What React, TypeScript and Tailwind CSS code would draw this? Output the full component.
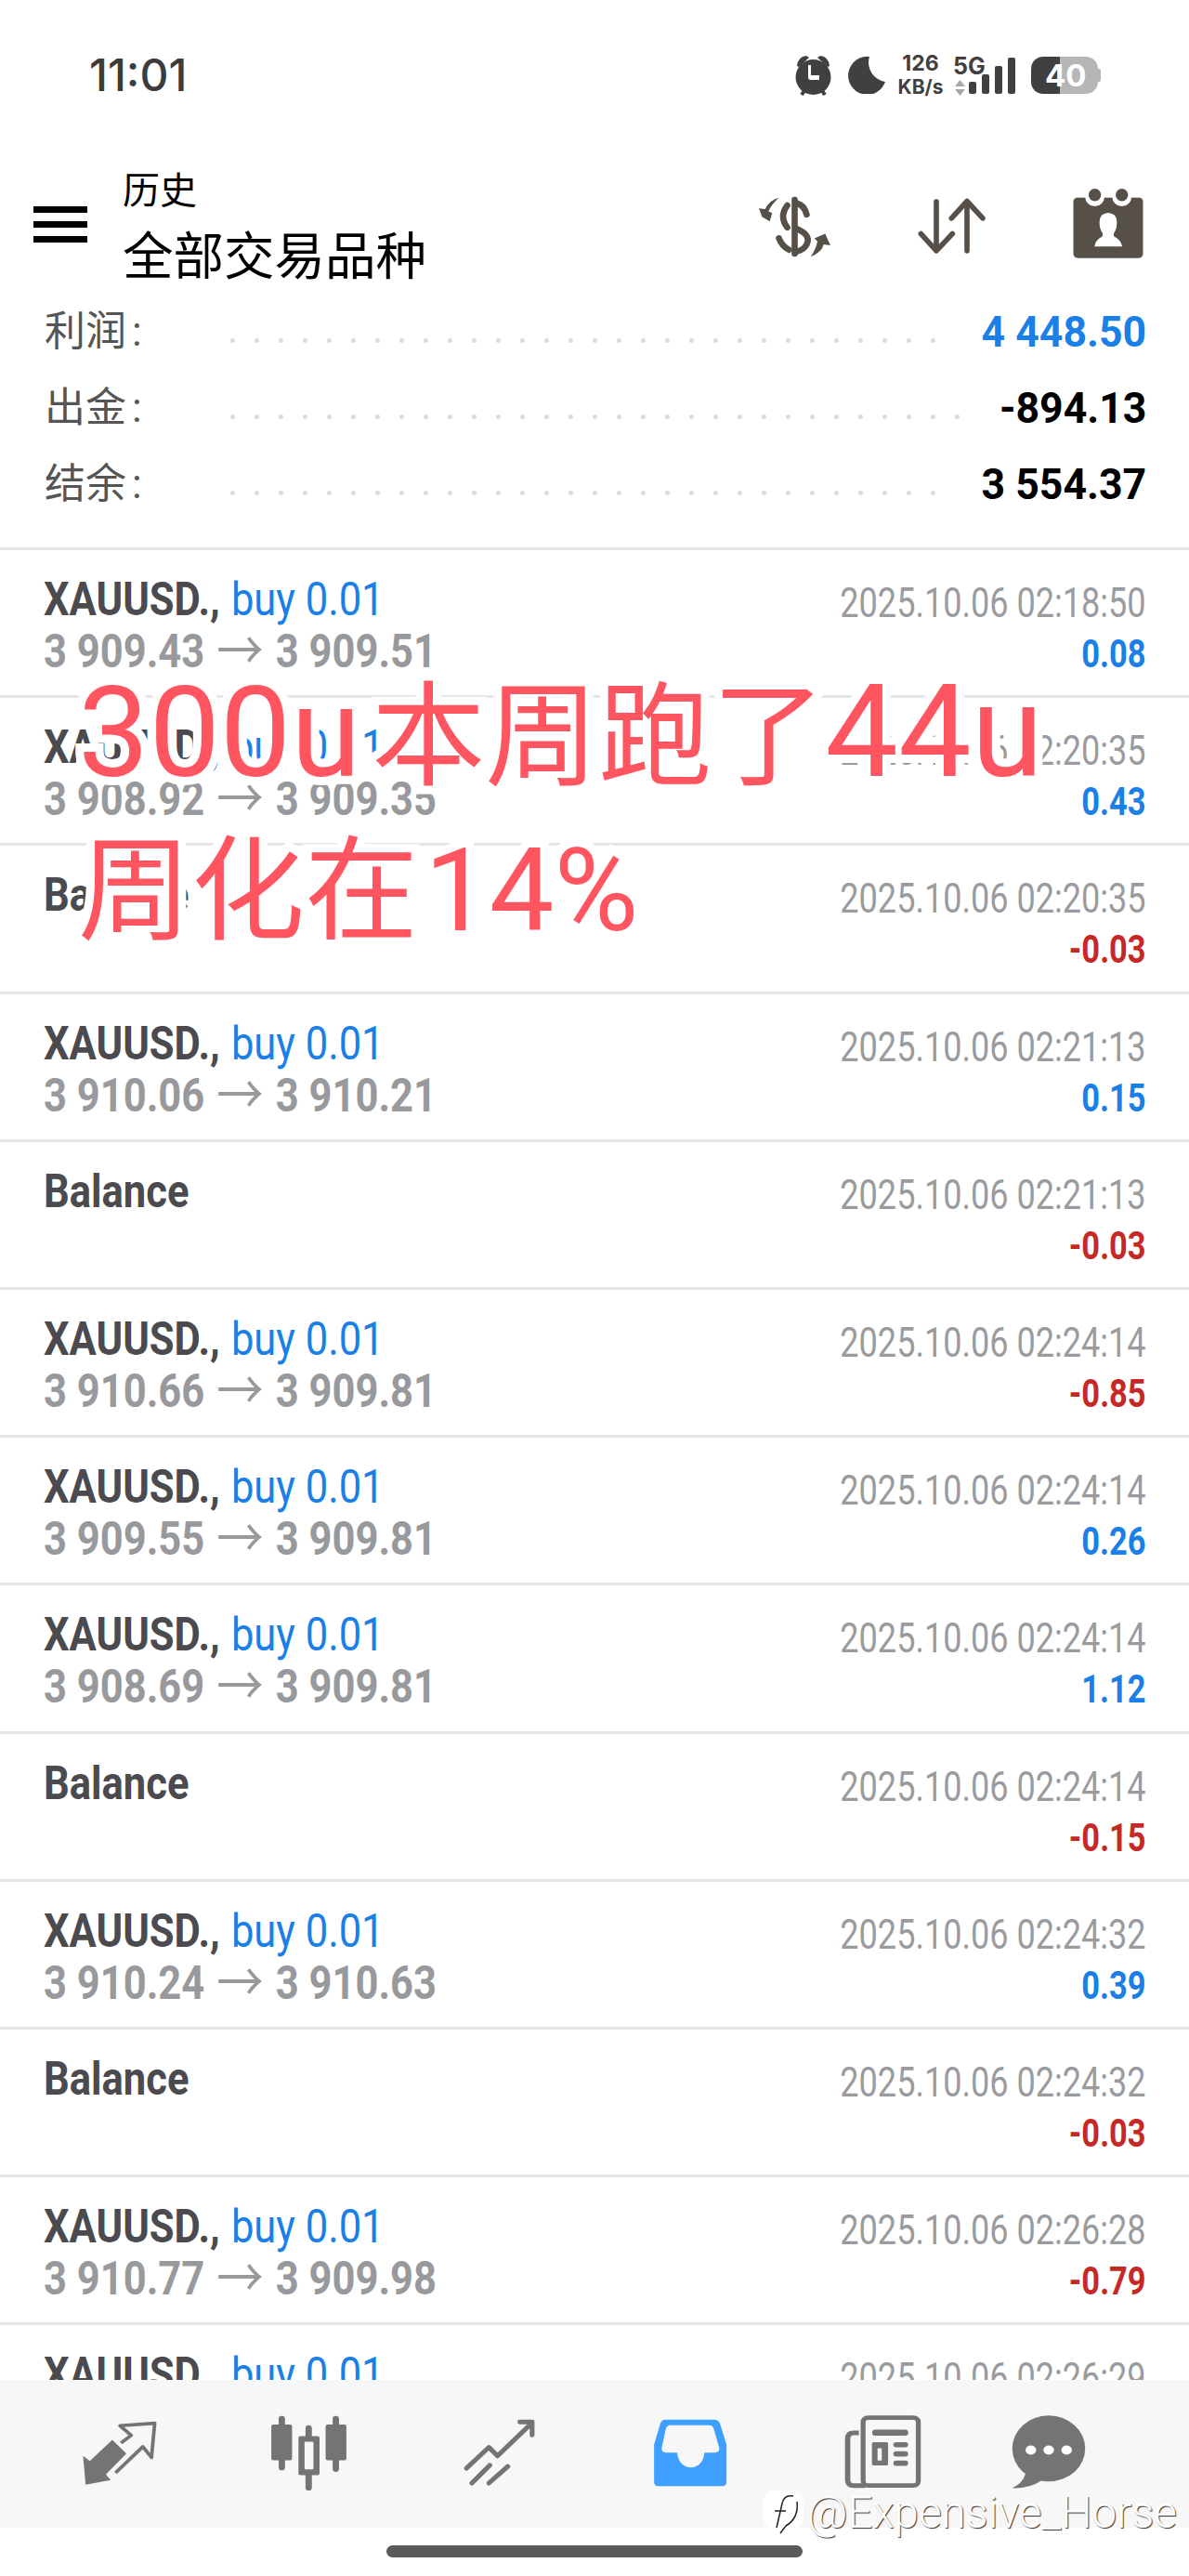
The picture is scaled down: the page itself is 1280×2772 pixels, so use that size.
import React from "react";

type Row = { t: string; v: string; p?: [string, string] };
const rows: Row[] = [
  { p: ["3 909.43", "3 909.51"], t: "02:18:50", v: "0.08" },
  { p: ["3 908.92", "3 909.35"], t: "02:20:35", v: "0.43" },
  { t: "02:20:35", v: "-0.03" },
  { p: ["3 910.06", "3 910.21"], t: "02:21:13", v: "0.15" },
  { t: "02:21:13", v: "-0.03" },
  { p: ["3 910.66", "3 909.81"], t: "02:24:14", v: "-0.85" },
  { p: ["3 909.55", "3 909.81"], t: "02:24:14", v: "0.26" },
  { p: ["3 908.69", "3 909.81"], t: "02:24:14", v: "1.12" },
  { t: "02:24:14", v: "-0.15" },
  { p: ["3 910.24", "3 910.63"], t: "02:24:32", v: "0.39" },
  { t: "02:24:32", v: "-0.03" },
  { p: ["3 910.77", "3 909.98"], t: "02:26:28", v: "-0.79" },
  { p: ["3 910.77", "3 909.98"], t: "02:26:29", v: "0.10" },
];

function TradeRow({ r }: { r: Row }) {
  const neg = r.v.startsWith("-");
  return (
    <div className="flex h-[159.2px] shrink-0 justify-between border-b-[3px] border-[#e5e5e5] pl-[47px] pr-[46px] pt-[25px]">
      <div className="flex origin-left scale-x-[0.87] flex-col whitespace-nowrap text-[50px] leading-[56px]">
        {r.p ? (
          <div>
            <span className="font-bold text-[#4a4a4f]">XAUUSD.,</span>
            <span className="ml-[14px] text-[#1a7fe6]">buy 0.01</span>
          </div>
        ) : (
          <div className="font-bold text-[#4a4a4f]">Balance</div>
        )}
        {r.p && (
          <div className="flex gap-[15px] font-bold text-[#98999c]">
            <span>{r.p[0]}</span>
            <span className="text-[58px] font-normal">→</span>
            <span>{r.p[1]}</span>
          </div>
        )}
      </div>
      <div className="flex origin-right scale-x-[0.82] flex-col items-end whitespace-nowrap pt-[4px]">
        <div className="text-[44px] leading-[56px] text-[#9a9b9e]">2025.10.06 {r.t}</div>
        <div className={`text-[42px] font-bold leading-[54px] ${neg ? "text-[#c62828]" : "text-[#1a7fe6]"}`}>{r.v}</div>
      </div>
    </div>
  );
}

function Summary({ label, value, dots, blue }: { label: string; value: string; dots: number; blue?: boolean }) {
  return (
    <div className="flex h-[82px] items-center pl-[48px] pr-[46px]">
      <div className="w-[200px] shrink-0 text-[44px] text-[#555]">
        {label}
        <span className="ml-[6px]">:</span>
      </div>
      <div className="mt-[18px] flex gap-[21px]">
        {Array.from({ length: dots }).map((_, i) => (
          <span key={i} className="h-[5px] w-[5px] rounded-full bg-[#dcdcdc]" />
        ))}
      </div>
      <div className={`ml-auto origin-right scale-x-[0.97] whitespace-nowrap text-[46px] font-bold ${blue ? "text-[#1a7fe6]" : "text-black"}`}>
        {value}
      </div>
    </div>
  );
}

function Status() {
  return (
    <div className="flex h-[162px] items-center justify-between pb-[1px] pl-[96px] pr-[95px]">
      <div className="text-[48px] font-medium text-[#3c3c3c] [font-family:Inter,sans-serif]">11:01</div>
      <div className="flex items-center text-[#404040]">
        <svg width="39" height="45" viewBox="0 0 39 45">
          <circle cx="19.5" cy="25" r="19" fill="#404040" />
          <path d="M2 13 Q3 3 12 2 L15 4 L4 14Z M37 13 Q36 3 27 2 L24 4 L35 14Z" fill="#404040" />
          <path d="M7 44 L11 38 M32 44 L28 38" stroke="#404040" strokeWidth="4" />
          <path d="M17 15 V26 H26 V31 H17 Q14 31 14 28 V15Z" fill="#fff" transform="translate(0 -3) " />
        </svg>
        <svg className="ml-[17px]" width="41" height="41" viewBox="0 0 41 41">
          <path d="M24 1 A20.5 20.5 0 1 0 41 28 A21 21 0 0 1 24 1Z" fill="#404040" />
        </svg>
        <div className="ml-[12px] flex w-[52px] flex-col items-center font-bold leading-none [font-family:Inter,sans-serif]">
          <span className="text-[23px] leading-[25px]">126</span>
          <span className="text-[21px] leading-[25px]">KB/s</span>
        </div>
        <div className="ml-[9px] flex w-[15px] flex-col">
          <span className="whitespace-nowrap text-[25px] font-bold leading-[26px] [font-family:Inter,sans-serif]">5G</span>
          <svg width="11" height="17" viewBox="0 0 11 17" className="mt-[2px] ml-[2px]">
            <path d="M5.5 0 L11 7 H0Z M5.5 17 L11 10 H0Z" fill="#a8a8a8" />
          </svg>
        </div>
        <div className="ml-[2px] flex items-end gap-[6px] self-end pb-[5px]">
          <span className="h-[13px] w-[8px] rounded-[2px] bg-[#404040]" />
          <span className="h-[21px] w-[8px] rounded-[2px] bg-[#404040]" />
          <span className="h-[30px] w-[8px] rounded-[2px] bg-[#404040]" />
          <span className="h-[39px] w-[8px] rounded-[2px] bg-[#404040]" />
        </div>
        <div className="relative ml-[17px] flex h-[40px] w-[75px] items-center">
          <span className="h-[40px] w-[31px] rounded-l-[13px] bg-[#404040]" />
          <span className="h-[40px] w-[41px] rounded-r-[13px] bg-[#b6b6b6]" />
          <span className="h-[14px] w-[3px] rounded-r-[2px] bg-[#b6b6b6]" />
          <span className="absolute left-[15px] top-0 text-[33px] font-bold leading-[40px] text-white [font-family:Inter,sans-serif]">40</span>
        </div>
      </div>
    </div>
  );
}

function Header() {
  const c = "#575049";
  return (
    <div className="flex h-[154px] items-start">
      <div className="ml-[36px] mt-[60px] flex w-[58px] flex-col gap-[9px]">
        <span className="h-[7px] bg-black" />
        <span className="h-[7px] bg-black" />
        <span className="h-[7px] bg-black" />
      </div>
      <div className="ml-[38px] flex w-[328px] flex-col whitespace-nowrap text-black">
        <div className="mt-[19px] text-[40px] leading-[50px]">历史</div>
        <div className="mt-[12px] text-[54.5px] leading-[66px]">全部交易品种</div>
      </div>
      <svg className="ml-[355px] mt-[48px]" width="82" height="68" viewBox="110 55 245 205">
        <rect x="221" y="60" width="20" height="195" rx="10" fill={c} />
        <path d="M240 82 Q262 88 270 118 M207 88 Q180 125 207 160 M240 165 Q285 185 270 215 Q260 232 240 237 M180 195 Q190 220 212 232" stroke={c} strokeWidth="20" strokeLinecap="round" fill="none" />
        <path d="M180 63 Q150 70 135 100 L115 98 L125 125 L150 140 L158 113 L146 108 Q155 85 180 63Z M283 255 Q320 240 325 215 L347 218 L330 180 L295 195 L305 205 Q300 230 283 255Z" fill={c} />
      </svg>
      <svg className="ml-[90px] mt-[50px]" width="75" height="62" viewBox="625 65 225 185">
        <path d="M688 80 V238 M638 183 L688 238 L740 183 M787 238 V78 M737 133 L787 78 L838 133" stroke={c} strokeWidth="17" strokeLinecap="round" strokeLinejoin="round" fill="none" />
      </svg>
      <svg className="ml-[93px] mt-[41px]" width="76" height="75" viewBox="1128 42 224 224">
        <rect x="1128" y="70" width="224" height="195" rx="14" fill={c} />
        <circle cx="1197" cy="68" r="31" fill="#fff" />
        <circle cx="1284" cy="68" r="31" fill="#fff" />
        <rect x="1128" y="42" width="224" height="28" fill="#fff" />
        <circle cx="1197" cy="62" r="20" fill={c} />
        <circle cx="1284" cy="62" r="20" fill={c} />
        <path d="M1240 120 Q1212 122 1212 150 Q1212 172 1222 185 L1222 195 Q1200 205 1196 228 L1285 228 Q1280 205 1258 195 L1258 185 Q1268 172 1268 150 Q1268 122 1240 120Z" fill="#fff" />
      </svg>
    </div>
  );
}

function Nav() {
  const g = "#747474";
  return (
    <div className="flex h-[159px] shrink-0 items-start bg-[#f7f7f8]">
      <svg className="ml-[87px] mt-[42px]" width="83" height="73" viewBox="50 40 240 220" preserveAspectRatio="none">
        <path d="M148 108 L192 152 L128 220 L143 238 L65 253 L57 160 L78 176Z" fill={g} />
        <path d="M158 215 L243 130 L270 165 L280 54 L172 62 L207 93 L175 118" stroke={g} strokeWidth="11" fill="none" strokeLinejoin="round" />
      </svg>
      <svg className="ml-[120px] mt-[38px]" width="86" height="82" viewBox="640 28 250 245" preserveAspectRatio="none">
        <g fill={g}>
          <rect x="669" y="30" width="20" height="175" rx="10" />
          <rect x="646" y="58" width="65" height="115" rx="6" />
          <rect x="753" y="60" width="20" height="210" rx="10" />
          <rect x="731" y="95" width="66" height="126" rx="6" />
          <rect x="838" y="30" width="20" height="180" rx="10" />
          <rect x="816" y="58" width="65" height="115" rx="6" />
        </g>
        <rect x="750" y="113" width="28" height="89" rx="4" fill="#f7f7f8" />
      </svg>
      <svg className="ml-[121px] mt-[41px]" width="81" height="73" viewBox="1240 35 235 220" preserveAspectRatio="none">
        <path d="M1255 198 L1325 130 L1352 158 L1455 55 M1422 48 H1460 V90 M1272 246 L1328 188 M1325 246 L1384 192" stroke={g} strokeWidth="15" strokeLinecap="round" strokeLinejoin="round" fill="none" />
      </svg>
      <svg className="ml-[125px] mt-[42px]" width="81" height="73" viewBox="35 38 215 218" preserveAspectRatio="none">
        <path d="M70 40 H210 Q222 40 226 52 L245 120 V240 Q245 254 230 254 H52 Q38 254 38 240 V120 L56 52 Q60 40 70 40Z" fill="#3f9fff" />
        <path d="M85 58 H195 Q205 58 208 68 L224 130 Q226 146 212 146 H182 C178 210 108 210 104 146 H72 Q58 146 60 130 L72 68 Q76 58 85 58Z" fill="#f7f7f8" />
      </svg>
      <svg className="ml-[124px] mt-[38px]" width="84" height="79" viewBox="578 28 222 238" preserveAspectRatio="none">
        <rect x="634" y="36" width="157" height="220" rx="14" fill="none" stroke={g} strokeWidth="14" />
        <path d="M622 85 H607 Q590 85 590 105 V238 Q590 256 607 256 H640" stroke={g} strokeWidth="15" fill="none" />
        <g fill={g}>
          <rect x="660" y="75" width="102" height="19" rx="8" />
          <path fillRule="evenodd" d="M664 115 H700 Q705 115 705 120 V186 Q705 191 700 191 H664 Q659 191 659 186 V120 Q659 115 664 115Z M675 135 V175 H687 V135Z" />
          <rect x="720" y="115" width="42" height="17" rx="8" />
          <rect x="720" y="145" width="42" height="17" rx="8" />
          <rect x="720" y="175" width="42" height="17" rx="8" />
        </g>
      </svg>
      <svg className="ml-[97px] mt-[38px]" width="80" height="79" viewBox="1060 28 212 236" preserveAspectRatio="none">
        <ellipse cx="1166" cy="135" rx="104" ry="106" fill={g} />
        <path d="M1100 215 Q1092 248 1062 262 Q1110 264 1148 236Z" fill={g} />
        <circle cx="1115" cy="140" r="15" fill="#fff" />
        <circle cx="1166" cy="140" r="15" fill="#fff" />
        <circle cx="1217" cy="140" r="15" fill="#fff" />
      </svg>
    </div>
  );
}

export default function App() {
  return (
    <div className="relative flex h-[2772px] w-[1280px] flex-col overflow-hidden bg-white [font-family:Roboto,'Noto_Sans_CJK_SC',sans-serif]">
      <Status />
      <Header />
      <div className="flex h-[276px] shrink-0 flex-col border-b-[3px] border-[#e5e5e5]">
        <Summary label="利润" value="4 448.50" dots={30} blue />
        <Summary label="出金" value="-894.13" dots={31} />
        <Summary label="结余" value="3 554.37" dots={30} />
      </div>
      <div className="flex h-[1969px] shrink-0 flex-col overflow-hidden">
        {rows.map((r, i) => (
          <TradeRow key={i} r={r} />
        ))}
      </div>
      <Nav />
      <div className="flex flex-1 justify-center pt-[19px]">
        <span className="h-[13px] w-[448px] rounded-full bg-[#5a5a5a]" />
      </div>

      <div className="absolute left-[84px] top-[705px] whitespace-nowrap text-[122px] leading-[165px] text-[#ff5560] [-webkit-text-stroke:18px_#fff] [paint-order:stroke_fill]">
        <div>
          <span className="mr-[12px] text-[136px]">300u</span>本周跑了<span className="text-[140px]">44u</span>
        </div>
        <div>
          周化在<span className="ml-[7px] text-[124px]">14%</span>
        </div>
      </div>

      <div className="absolute left-[822px] top-[2680px] flex items-center">
        <svg width="46" height="48" viewBox="0 0 46 48">
          <rect x="0" y="0" width="43" height="42" rx="12" fill="#fff" />
          <path d="M32 6 Q22 4 20 14 L14 40 M12 22 H24 M36 12 Q38 30 24 38 L18 46" stroke="#222" strokeWidth="1.5" fill="none" />
        </svg>
        <span className="ml-[1px] whitespace-nowrap text-[47.5px] font-light leading-[48px] text-white [text-shadow:1px_1px_1px_#333]">@Expensive_Horse</span>
      </div>
    </div>
  );
}
